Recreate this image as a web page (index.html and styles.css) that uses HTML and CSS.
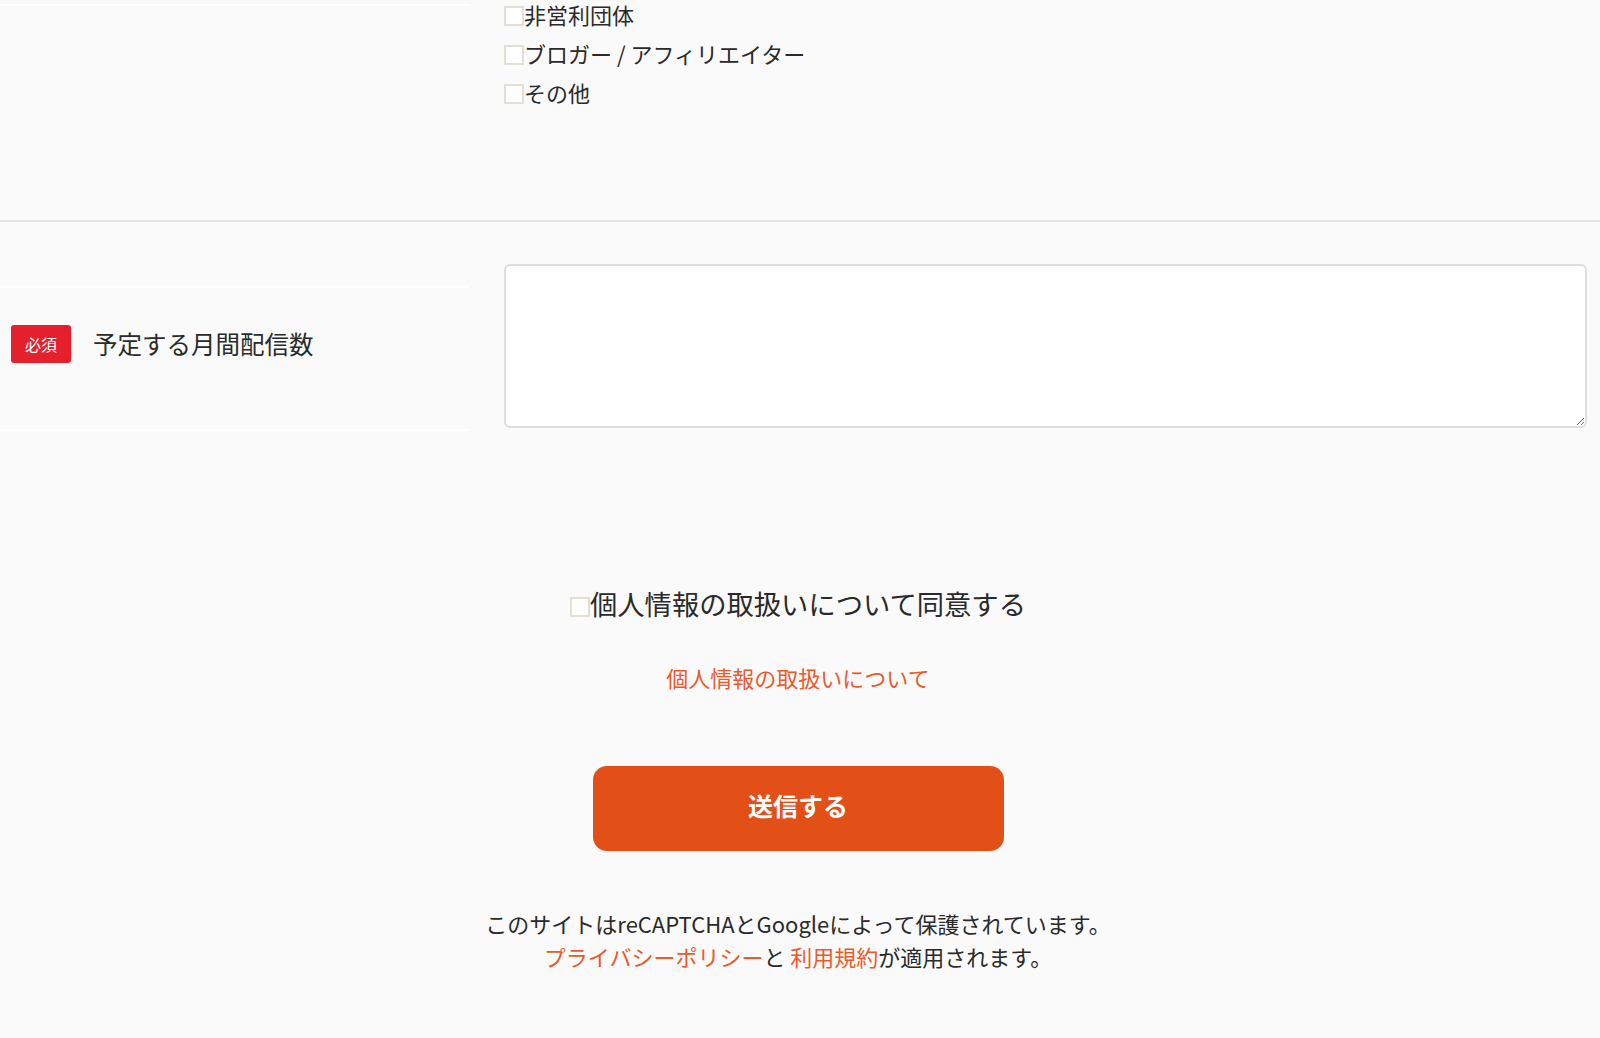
FILE: index.html
```
<!DOCTYPE html>
<html lang="ja">
<head>
    <meta charset="UTF-8">
    <title>お問い合わせ</title>
    <meta name="viewport" content="width=device-width, initial-scale=1.0">
    <link rel="stylesheet" href="styles.css">
</head>
<body>
    <form class="contact-form" onsubmit="return false;">
        <div class="form-row form-row--divided">
            <div class="form-label form-label--tail"></div>
            <div class="form-field">
                <ul class="check-list">
                    <li><label class="check"><input type="checkbox" name="type"><span>非営利団体</span></label></li>
                    <li><label class="check"><input type="checkbox" name="type"><span>ブロガー / アフィリエイター</span></label></li>
                    <li><label class="check"><input type="checkbox" name="type"><span>その他</span></label></li>
                </ul>
            </div>
        </div>
        <div class="form-row">
            <div class="form-label form-label--block">
                <span class="badge">必須</span>
                <span class="label-text">予定する月間配信数</span>
            </div>
            <div class="form-field form-field--text">
                <textarea class="textarea" name="volume"></textarea>
            </div>
        </div>
        <div class="form-foot">
            <label class="agree"><input type="checkbox" name="agree"><span>個人情報の取扱いについて同意する</span></label>
            <a class="policy-link" href="#">個人情報の取扱いについて</a>
            <button class="submit-btn" type="submit">送信する</button>
            <p class="recaptcha">
                このサイトはreCAPTCHAとGoogleによって保護されています。<br>
                <a href="#">プライバシーポリシー</a>と <a href="#">利用規約</a>が適用されます。
            </p>
        </div>
    </form>
</body>
</html>
```

FILE: styles.css
```
body { margin: 0; background: #fafafa; color: #2a2a2a; font-family: "Noto Sans CJK JP", "Noto Sans", sans-serif; }
.form-row {
    display: flex;
}
.form-row--divided {
    border-bottom: 2px solid #e4e4e4;
}
.form-label {
    width: 470px;
    flex-shrink: 0;
    box-sizing: border-box;
    border-top: 2px solid #fff;
    border-bottom: 2px solid #fff;
}
.form-label--tail {
    height: 6px;
    border-top: none;
}
.form-label--block {
    margin-top: 64px;
    height: 145px;
    padding: 0 0 30px 11px;
    display: flex;
    align-items: center;
    gap: 22px;
}
.form-field {
    flex: 1;
    padding: 0 13px 0 34px;
}
.form-field--text {
    padding-top: 42px;
}

/* checkbox list */
.check-list {
    list-style: none;
    margin: 0;
    padding: 0 0 110px;
    display: flex;
    flex-direction: column;
    gap: 7px;
}
.check {
    display: flex;
    align-items: center;
    height: 32px;
    font-size: 22px;
}
.check span {
    margin-top: -4px;
}
input[type="checkbox"] {
    appearance: none;
    -webkit-appearance: none;
    width: 20px;
    height: 20px;
    margin: 0;
    box-sizing: border-box;
    border: 2px solid #e3dfd5;
    background: #fff;
    flex-shrink: 0;
}

.badge {
    width: 60px;
    height: 38px;
    display: inline-flex;
    align-items: center;
    justify-content: center;
    background: #e3202c;
    color: #fff;
    font-size: 16px;
    border-radius: 3px;
}
.label-text {
    font-size: 24.5px;
}
.textarea {
    display: block;
    width: 100%;
    height: 164px;
    box-sizing: border-box;
    border: 2px solid #dedede;
    border-radius: 6px;
    background: #fff;
    resize: vertical;
    font-family: inherit;
}

/* footer */
.form-foot {
    display: flex;
    flex-direction: column;
    align-items: center;
    padding: 152px 4px 60px 0;
}
.agree {
    display: flex;
    align-items: center;
    font-size: 27.3px;
    line-height: 40px;
}
.agree input {
    margin-top: 7px;
}
.policy-link {
    margin-top: 38px;
    font-size: 22px;
    line-height: 32px;
    color: #ea5a2c;
    text-decoration: none;
}
.submit-btn {
    margin-top: 73px;
    width: 411px;
    height: 85px;
    padding: 0 0 7px;
    border: none;
    border-radius: 14px;
    background: #e25018;
    color: #fff;
    font-family: inherit;
    font-size: 25px;
    font-weight: bold;
    cursor: pointer;
}
.recaptcha {
    margin: 56px 0 0;
    font-size: 22px;
    line-height: 33px;
    text-align: center;
}
.recaptcha a {
    color: #ea5a2c;
    text-decoration: none;
}
```
